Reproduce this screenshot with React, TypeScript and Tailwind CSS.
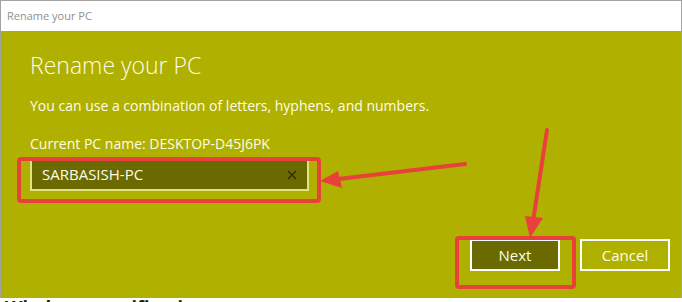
import React from "react";

export default function App() {
  return (
    <div className="relative w-[682px] h-[302px] overflow-hidden bg-white" style={{ fontFamily: '"Open Sans", "Noto Sans", sans-serif' }}>
      <div className="flex flex-col w-[682px] h-[298px] border-x border-t border-[#a3a3a3]">
        <div className="h-[30px] shrink-0 bg-white flex items-center pl-[6px] text-[11px] text-[#909090]">
          Rename your PC
        </div>
        <div className="flex-1 bg-[#b0b000] flex flex-col pl-[29px] pr-[11px] text-[#fdfde8]">
          <div className="mt-[18px] text-[23px] font-light leading-[32px]">Rename your PC</div>
          <div className="mt-[15px] text-[14px] leading-[20px]">You can use a combination of letters, hyphens, and numbers.</div>
          <div className="mt-[18px] text-[14px] leading-[20px]">Current PC name: DESKTOP-D45J6PK</div>
          <div className="mt-[4px] w-[279px] h-[33px] bg-[#6a6a00] border-2 border-[#e2e27e] flex items-center justify-between pl-[10px] pr-[8px]">
            <span className="text-[15px]">SARBASISH-PC</span>
            <svg width="10" height="10" viewBox="0 0 10 10" className="mr-[2px]">
              <path d="M1 1 L9 9 M9 1 L1 9" stroke="#2a2a00" strokeWidth="1.2" />
            </svg>
          </div>
          <div className="mt-[48px] flex justify-end gap-[20px]">
            <button className="w-[90px] h-[32px] bg-[#6a6a00] border-2 border-white text-[15px] text-[#fdfde8]">Next</button>
            <button className="w-[90px] h-[32px] border-2 border-white text-[15px] text-[#fdfde8]">Cancel</button>
          </div>
        </div>
      </div>
      <div className="pl-[5px] pt-[2px] text-[18px] font-bold text-[#1a1a1a] leading-[14px]">Windows specifications</div>

      <div className="absolute left-[17px] top-[157px] w-[304px] h-[46px] border-[4px] border-[#e8403a] rounded-[4px]" />
      <div className="absolute left-[455px] top-[236px] w-[121px] h-[53px] border-[4px] border-[#e8403a] rounded-[4px]" />
      <svg className="absolute left-0 top-0" width="682" height="302" viewBox="0 0 682 302">
        <g stroke="#e8403a" strokeWidth="4" strokeLinecap="round" fill="#e8403a">
          <line x1="465" y1="164" x2="330" y2="180" />
          <line x1="547" y1="130" x2="532" y2="228" />
        </g>
        <polygon points="320,181 338,171 342,188" fill="#e8403a" />
        <polygon points="530,238 525,216 543,218" fill="#e8403a" />
      </svg>
    </div>
  );
}
